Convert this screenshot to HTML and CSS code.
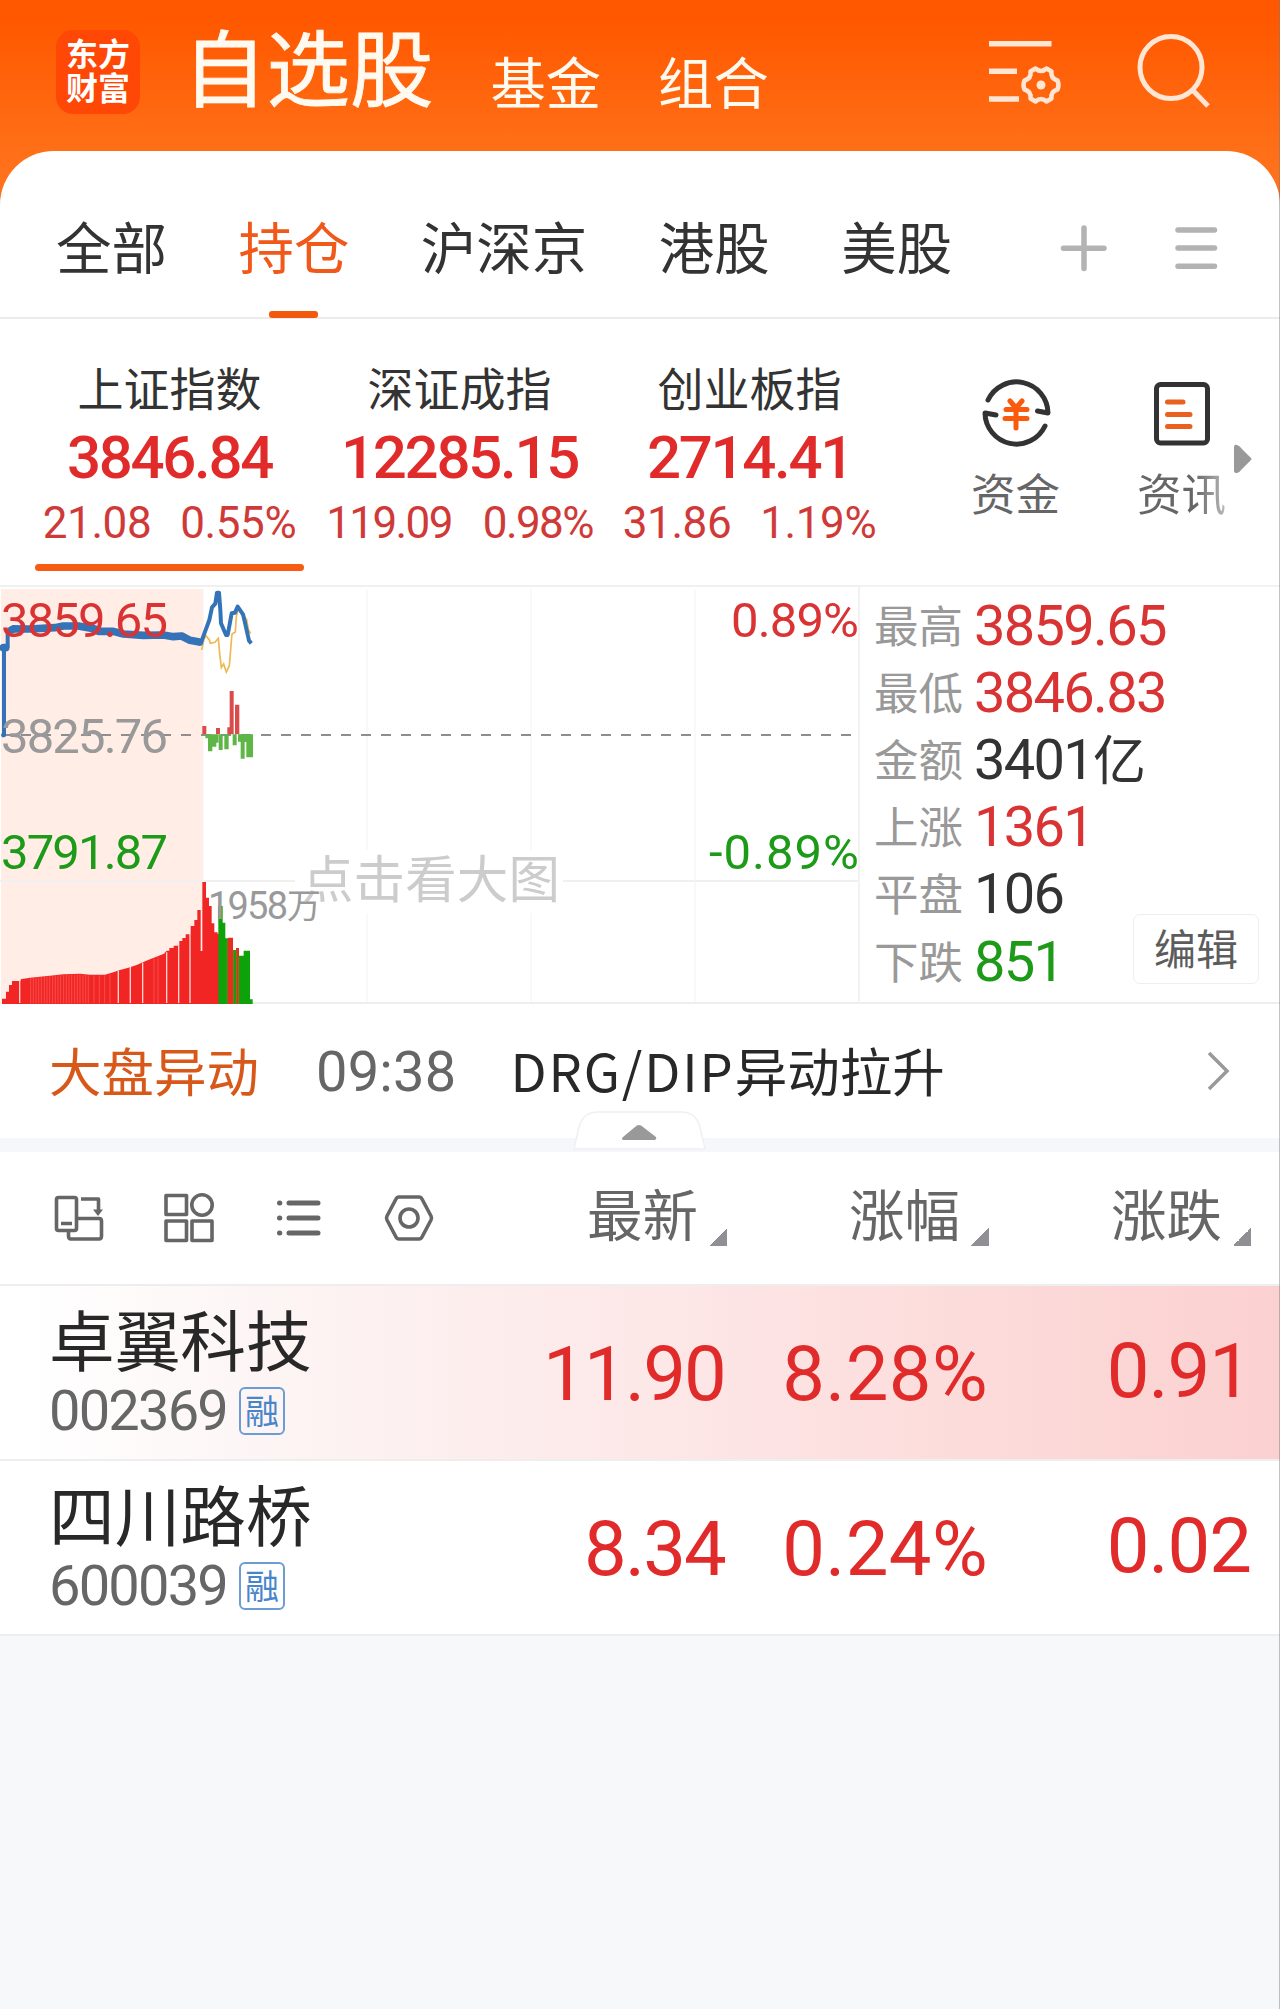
FILE: index.html
```html
<!DOCTYPE html>
<html lang="zh-CN">
<head>
<meta charset="utf-8">
<title>自选股</title>
<link rel="stylesheet" href="styles.css">
</head>
<body>
<div class="app">
  <header class="topbar">
    <div class="logo"><span>东方</span><span>财富</span></div>
    <nav class="sections">
      <span class="section-main">自选股</span>
      <span class="section">基金</span>
      <span class="section">组合</span>
    </nav>
    <div class="top-icons">
      <svg class="icon-manage" width="78" height="72" viewBox="984 36 78 72" fill="none" stroke="#ffe5d3" stroke-width="5.5">
        <path d="M989 43.700H1051.500M989 71.300H1017M989 99H1019"/>
        <path stroke-width="4.500" stroke-linejoin="round" d="M1035.500 68.500Q1041 73.500 1046.500 68.500L1051.500 71.500Q1050.500 78.500 1057.500 80.500Q1059.500 85 1057.500 89.500Q1050.500 91.500 1051.500 98.500L1046.500 101.500Q1041 96.500 1035.500 101.500L1030.500 98.500Q1031.500 91.500 1024.500 89.500Q1022.500 85 1024.500 80.500Q1031.500 78.500 1030.500 71.500Z"/>
        <circle cx="1041" cy="85" r="4.500" fill="#ffe5d3" stroke="none"/>
      </svg>
      <svg class="icon-search" width="78" height="78" viewBox="1134 32 78 78" fill="none" stroke="#ffe5d3" stroke-width="5">
        <circle cx="1171" cy="67.500" r="31"/><path d="M1192.500 90L1208 106"/>
      </svg>
    </div>
  </header>

  <main class="sheet">
    <nav class="tabs">
      <span class="tab">全部</span>
      <span class="tab tab-active">持仓</span>
      <span class="tab">沪深京</span>
      <span class="tab">港股</span>
      <span class="tab">美股</span>
      <svg class="tab-tools" width="166" height="50" viewBox="1056 223 166 50" stroke="#b3b3b3" stroke-width="5.500" stroke-linecap="round">
        <path d="M1063.500 248.200H1104M1084 228V268.500M1178 230H1214.500M1178 248H1214.500M1178 266.200H1214.500"/>
      </svg>
    </nav>

    <section class="indices">
      <div class="index index-active">
        <span class="index-name">上证指数</span>
        <span class="index-value">3846.84</span>
        <span class="index-change"><span>21.08</span><span>0.55%</span></span>
      </div>
      <div class="index">
        <span class="index-name">深证成指</span>
        <span class="index-value">12285.15</span>
        <span class="index-change index-change-long"><span>119.09</span><span>0.98%</span></span>
      </div>
      <div class="index">
        <span class="index-name">创业板指</span>
        <span class="index-value">2714.41</span>
        <span class="index-change"><span>31.86</span><span>1.19%</span></span>
      </div>
      <div class="shortcut shortcut-fund">
        <svg width="76" height="76" viewBox="978 375 76 76" fill="none" stroke="#333" stroke-width="5" stroke-linecap="round" stroke-linejoin="round">
          <path d="M988 400A31.500 31.500 0 0 1 1048 413L1037.500 411M1045 426A31.500 31.500 0 0 1 985 413L996 415"/>
          <path stroke="#fa5a0c" d="M1010 401L1016 408L1022 401M1006 409.500H1027M1005 418.500H1027M1016 408V428"/>
        </svg>
        <span>资金</span>
      </div>
      <div class="shortcut shortcut-news">
        <svg width="76" height="76" viewBox="1144 375 76 76" fill="none" stroke="#333" stroke-width="5" stroke-linecap="round">
          <rect x="1156.500" y="384.500" width="51" height="58.500" rx="4"/>
          <path stroke="#ea601f" d="M1167.500 402H1183M1167.500 414.500H1190M1167.500 426.500H1190"/>
        </svg>
        <span>资讯</span>
      </div>
      <svg class="more" width="18" height="30" viewBox="0 0 18 30"><path fill="#999" d="M0 3Q0 0 3 1Q6 2 8 5L17 14Q18 15 17 16L8 25Q6 28 3 29Q0 29 0 27Z"/></svg>
    </section>

    <section class="market">
      <svg class="chart" width="860" height="420" viewBox="0 585 860 420">
        <rect x="1" y="589" width="202" height="415" fill="#ffede6"/>
        <path d="M0 586H860M0 881H295M563 881H860M203 881V1003" stroke="#f0f0f0" stroke-width="2"/>
        <path d="M203 589V1003M367 589V850M367 913V1003M531 589V850M531 913V1003M695 589V1003" stroke="#f3f3f3"/>
        <path d="M859 586V1003" stroke="#f2f2f2" stroke-width="2"/>
        <path d="M1 735H852" stroke="#8e8e8e" stroke-width="2" stroke-dasharray="10 10"/>
        <g transform="translate(0 580) scale(.33333)">
          <path fill="#f22525" d="M6 1272V1256H18V1235H27V1215H36V1203H62V1198L90 1193L120 1190L150 1187L190 1183L240 1181L270 1184H315L340 1177L360 1170L385 1163L410 1155L430 1146L450 1138L475 1128L492 1121L500 1112H508V1104H521V1097H538V1083H547V1074H557V1063H572V1038H583V1020H592V990H602V1113H607V906H618V953H627V978H635V1030H643V1057H653V1062H660V1272Z"/>
          <path fill="#0da10a" d="M655 1272V978H668V1028H676V1075H684V1272ZM699 1272V1110H708V1272ZM716 1272V1127H731V1112H750V1258H758V1272Z"/>
          <path fill="#e32f20" d="M684 1272V1073H699V1272ZM708 1272V1104H717V1272Z"/>
          <path stroke="#927020" stroke-width="3" d="M681 1080V1272M700 1110V1272M709 1110V1272M716 1130V1272"/>
          <path stroke="#ffd5d0" stroke-width="4" d="M59 1200V1269M355 1172V1269M391 1161V1269M428 1148V1269M500 1117V1269M536 1097V1269M570 1062V1269"/>
          <path stroke="#fa7772" stroke-width="1.500" d="M92 1194V1270M100 1193V1270M108 1193V1270M116 1192V1270M124 1191V1270M133 1190V1270M141 1190V1270M149 1189V1270M158 1188V1270M166 1187V1270M174 1186V1270M182 1186V1270M191 1185V1270M199 1184V1270M207 1184V1270M215 1184V1270M224 1184V1270M232 1184V1270M240 1184V1270M249 1184V1270M257 1185V1270M265 1186V1270M282 1186V1270M298 1186V1270M314 1186V1270M330 1183V1270M462 1136V1270M474 1132V1270"/>
          <path fill="#d94c4c" d="M607 438H619V463H607ZM648 444H660V463H648ZM682 442H689V333H701V463H682ZM705 374H718V463H705Z"/>
          <path fill="#5eb646" d="M616 463H655V488H649V500H637V514H624V475H616ZM656 463H668V510H656ZM673 463H686V508H673ZM698 463H710V496H698ZM714 463H759V532H739V486H734V536H722V485H714Z"/>
          <path fill="none" stroke="#edb953" stroke-width="5" d="M605 210L612 178L618 167L628 180L631 190L645 187L655 175L659 220L664 263L671 252L679 276L688 257L694 184L696 162L706 156L709 110L715 85M715 85L728 105L740 118L745 148L752 161"/>
          <path fill="none" stroke="#3573b9" stroke-width="12" stroke-linejoin="round" d="M5 466H12V202L23 200V163L40 141L90 146L165 143L190 136L235 136L285 147L295 156H340L370 162L430 166L490 163L520 171L545 164L570 180L590 188H603L614 158L628 120L636 82L646 71L651 38H657L661 90L663 130L678 165H683L695 100L705 98L713 80L729 103L735 128L747 182L754 190"/>
          <path fill="none" stroke="#3573b9" stroke-width="23" stroke-linecap="round" stroke-linejoin="round" d="M10 203H17M35 149L42 147L90 147L165 143L190 138L235 138L285 147L295 154H340L370 162L430 166L490 165L520 170L545 168L570 181L598 186"/>
        </g>
        <g class="chart-text">
          <text class="up" x="1" y="637" textLength="167">3859.65</text>
          <text class="muted" x="1" y="753" textLength="167">3825.76</text>
          <text class="down" x="1" y="868.500" textLength="167">3791.87</text>
          <text class="up" x="731" y="637" textLength="128">0.89%</text>
          <text class="down" x="709" y="868.500" textLength="150">-0.89%</text>
        </g>
        <text class="chart-hint" x="302" y="898" textLength="258">点击看大图</text>
        <text class="chart-volume" x="208" y="919" textLength="80">1958</text>
        <text class="chart-volume-unit" x="287" y="918">万</text>
      </svg>
      <div class="stats">
        <div class="stat"><span class="stat-label">最高</span><span class="stat-value up">3859.65</span></div>
        <div class="stat"><span class="stat-label">最低</span><span class="stat-value up">3846.83</span></div>
        <div class="stat"><span class="stat-label">金额</span><span class="stat-value">3401</span><span class="stat-unit">亿</span></div>
        <div class="stat"><span class="stat-label">上涨</span><span class="stat-value up">1361</span></div>
        <div class="stat"><span class="stat-label">平盘</span><span class="stat-value">106</span></div>
        <div class="stat"><span class="stat-label">下跌</span><span class="stat-value down">851</span></div>
        <span class="edit">编辑</span>
      </div>
    </section>

    <section class="alert">
      <span class="alert-title">大盘异动</span>
      <span class="alert-time">09:38</span>
      <span class="alert-text"><span class="alert-latin">DRG/DIP</span>异动拉升</span>
      <svg class="alert-arrow" width="24" height="42" viewBox="0 0 24 42" fill="none" stroke="#999" stroke-width="3.500"><path d="M3 3L21 21L3 39"/></svg>
    </section>
    <div class="divider">
      <svg class="handle" width="134" height="40" viewBox="572 1111 134 40">
        <path fill="#fff" stroke="#eff0f2" stroke-width="1.500" d="M574 1149L579 1127Q583 1112 598 1112H681Q696 1112 700 1127L705 1149Z"/>
        <path fill="#999" d="M623 1140Q621 1139 623 1137L635 1127Q639 1123 643 1127L656 1137Q657 1139 655 1140Z"/>
      </svg>
    </div>

    <section class="columns">
      <svg class="view-icons" width="384" height="56" viewBox="52 1190 384 56" fill="none" stroke="#666" stroke-width="3.600" stroke-linejoin="round">
        <rect x="56.500" y="1197.500" width="20" height="33" rx="2"/>
        <path d="M61 1223.500H72M77 1218.500H99Q101.500 1218.500 101.500 1221V1236Q101.500 1239 99 1239H71Q68.500 1239 68.500 1236V1231M81 1199H98.500V1211"/>
        <path fill="#666" stroke="none" d="M93 1209.500H103L98 1216Z"/>
        <rect x="166" y="1195.500" width="20.500" height="19"/><rect x="166" y="1221" width="20.500" height="19.500"/><rect x="192" y="1221" width="20" height="19.500"/><circle cx="202" cy="1205" r="10.200"/>
        <path stroke-width="5" stroke-linecap="round" d="M289 1203H318M289 1218H318M289 1233H318M279.500 1203h.3M279.500 1218h.3M279.500 1233h.3"/>
        <path d="M399 1197H419Q421 1197 422 1199L431 1216Q432 1218 431 1220L422 1237Q421 1239 419 1239H399Q397 1239 396 1237L387 1220Q386 1218 387 1216L396 1199Q397 1197 399 1197Z"/>
        <circle cx="409" cy="1218" r="9"/>
      </svg>
      <span class="column">最新</span>
      <span class="column">涨幅</span>
      <span class="column">涨跌</span>
    </section>

    <section class="stocks">
      <div class="stock stock-flash">
        <div class="stock-id">
          <span class="stock-name">卓翼科技</span>
          <span class="stock-code">002369<span class="badge">融</span></span>
        </div>
        <span class="price">11.90</span><span class="percent">8.28%</span><span class="diff">0.91</span>
      </div>
      <div class="stock">
        <div class="stock-id">
          <span class="stock-name">四川路桥</span>
          <span class="stock-code">600039<span class="badge">融</span></span>
        </div>
        <span class="price">8.34</span><span class="percent">0.24%</span><span class="diff">0.02</span>
      </div>
    </section>
  </main>
</div>
</body>
</html>
```
FILE: styles.css
```css
* { box-sizing: border-box; }
body { margin: 0; background: #f7f8fa; }
.app {
  width: 1280px;
  height: 2009px;
  overflow: hidden;
  position: relative;
  background: linear-gradient(#ff5800 0, #ff5800 20px, #ff6f17 150px, #ff7420 210px, #f7f8fa 210px);
  color: #333;
  font-family: "Noto Sans CJK SC", sans-serif;
  white-space: nowrap;
}
.app::after {
  content: "";
  position: absolute;
  top: 0;
  right: 0;
  width: 1px;
  height: 100%;
  background: rgba(120, 120, 120, .45);
}
.up { color: #d93433; fill: #d93433; }
.down { color: #1c9a18; fill: #1c9a18; }
.muted { fill: #999; }

.topbar { height: 151px; display: flex; padding: 30px 72px 0 56px; }
.logo {
  width: 84px;
  height: 84px;
  border-radius: 17px;
  background: #ff4706;
  color: #fff;
  font-size: 32px;
  font-weight: 700;
  line-height: 34px;
  display: flex;
  flex-direction: column;
  align-items: center;
  padding-top: 5px;
}
.sections { display: flex; color: #fffaf0; line-height: 80px; margin-left: 43px; }
.section-main { font-size: 83.5px; margin-top: -6px; -webkit-text-stroke: .8px #fffaf0; }
.section { font-size: 55.3px; margin: 10px 0 0 57px; }
.top-icons { display: flex; margin-left: auto; }
.icon-manage { margin: 6px 72px 0 0; }
.icon-search { margin-top: 2px; margin-right: -4px; }

.sheet { background: #fff; border-radius: 54px 54px 0 0; height: 1485px; }
.tabs {
  height: 168px;
  border-bottom: 2px solid #ebebeb;
  padding: 0 58px 0 56px;
  display: flex;
  gap: 71.4px;
  font-size: 55.5px;
  line-height: 189px;
}
.tab-active { color: #f0591a; position: relative; }
.tab-active::after {
  content: "";
  position: absolute;
  left: 31px;
  top: 160px;
  width: 49px;
  height: 7px;
  border-radius: 3px;
  background: #f2590f;
}
.tab-tools { margin: 72px 0 0 auto; }

.indices { height: 267px; padding-left: 24.5px; display: flex; }
.index { width: 290px; display: flex; flex-direction: column; align-items: center; }
.index-name { font-size: 46px; line-height: 60px; margin-top: 37px; }
.index-value {
  font: 500 60px/70px Roboto, sans-serif;
  letter-spacing: -2.3px;
  color: #e12b2b;
  margin-top: 7px;
}
.index-change {
  display: flex;
  gap: 29px;
  font: 44px/50px Roboto, sans-serif;
  letter-spacing: -.4px;
  color: #cf3a39;
  margin-top: 5px;
}
.index-change-long { letter-spacing: -1.6px; gap: 31px; }
.index-active::after {
  content: "";
  width: 269px;
  height: 7px;
  border-radius: 4px;
  background: #f75c12;
  margin-top: 16px;
}
.shortcut {
  display: flex;
  flex-direction: column;
  align-items: center;
  width: 90px;
  padding-top: 56px;
  font-size: 44.5px;
  line-height: 60px;
  color: #666;
}
.shortcut span { margin-top: 11px; }
.shortcut-fund { margin-left: 76px; }
.shortcut-news { margin-left: 76px; }
.shortcut-news span {
  background: linear-gradient(90deg, #666 65%, #bbb);
  background-clip: text;
  color: transparent;
}
.more { margin: 125px 0 0 7px; }

.market { height: 419px; display: flex; margin-top: -1px; border-bottom: 2px solid #eee; }
.chart { flex: none; }
.chart-text { font: 49px Roboto, sans-serif; }
.chart-hint { font-size: 51.5px; fill: #ccc; }
.chart-volume { font: 38px Roboto, sans-serif; fill: #999; }
.chart-volume-unit { font-size: 34px; fill: #999; }
.stats { position: relative; flex: 1; padding: 5px 0 0 14px; border-top: 2px solid #f2f2f2; }
.stat { display: flex; align-items: center; height: 67.2px; }
.stat-label { font-size: 44.5px; color: #999; width: 100px; line-height: 60px; margin-top: -4px; }
.stat-value { font: 56px/60px Roboto, sans-serif; letter-spacing: -1.7px; }
.stat-unit { font-size: 53px; line-height: 60px; margin: -6px 0 0 0; }
.edit {
  position: absolute;
  left: 273px;
  top: 327px;
  width: 126px;
  height: 70px;
  border: 1.5px solid #eee;
  border-radius: 7px;
  font-size: 42px;
  line-height: 63px;
  text-align: center;
  color: #5c5c5c;
}

.alert { height: 134px; display: flex; padding: 0 50px 0 49px; line-height: 131px; }
.alert-title { font-size: 52.5px; color: #d8581a; }
.alert-time { font: 56px/136px Roboto, sans-serif; letter-spacing: .2px; color: #666; margin-left: 57px; }
.alert-text { font-size: 52.5px; color: #282828; margin-left: 54px; }
.alert-latin { letter-spacing: 1.9px; }
.alert-arrow { margin: 46px 0 0 auto; }
.divider { height: 14px; background: #f5f7fa; position: relative; }
.handle { position: absolute; left: 572px; top: -27px; }

.columns { height: 134px; border-bottom: 2px solid #eee; display: flex; padding-left: 52px; }
.view-icons { margin: 38px 151px 0 0; flex: none; }
.column {
  width: 140px;
  margin-right: 122px;
  flex: none;
  font-size: 55.5px;
  line-height: 121px;
  color: #666;
  background: linear-gradient(135deg, transparent 50%, #909094 50%) right 76px / 18px 18px no-repeat;
}

.stock { height: 175px; border-bottom: 2px solid #eee; display: flex; color: #e12b2b; font: 76px/177px Roboto, sans-serif; letter-spacing: -1px; }
.stock-flash { background: linear-gradient(90deg, #fff 2%, #fdf4f4 22%, #fde8e8 50%, #fcdcdb 75%, #fbd0d0); }
.stock-id { width: 460px; padding-left: 49px; letter-spacing: 0; }
.stock-name { display: block; font: 65.7px/90px "Noto Sans CJK SC", sans-serif; color: #282828; padding-top: 7px; }
.stock-code { display: flex; align-items: center; font: 56px/56px Roboto, sans-serif; letter-spacing: -1.8px; color: #666; }
.badge {
  width: 46px;
  height: 48px;
  border: 2px solid #6b9dd2;
  border-radius: 6px;
  margin-left: 12px;
  font: 34px/42px "Noto Sans CJK SC", sans-serif;
  letter-spacing: 0;
  text-align: center;
  color: #4886cb;
}
.price { width: 265px; text-align: right; letter-spacing: -1.8px; }
.percent { width: 263px; text-align: right; letter-spacing: .4px; }
.diff { width: 263px; text-align: right; line-height: 170px; }
```
